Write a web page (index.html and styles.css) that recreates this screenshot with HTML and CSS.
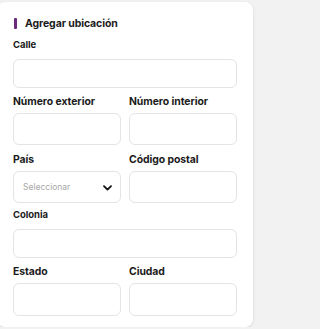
FILE: index.html
```html
<!DOCTYPE html>
<html lang="es">
<head>
<meta charset="utf-8">
<title>Agregar ubicación</title>
<link rel="stylesheet" href="styles.css">
</head>
<body>
<div class="card">
  <div class="title"><span class="bar"></span><span>Agregar ubicación</span></div>

  <div class="field wide first">
    <label class="label small">Calle</label>
    <div class="input"></div>
  </div>

  <div class="row r1">
    <div class="field">
      <label class="label">Número exterior</label>
      <div class="input tall"></div>
    </div>
    <div class="field">
      <label class="label">Número interior</label>
      <div class="input tall"></div>
    </div>
  </div>

  <div class="row r2">
    <div class="field">
      <label class="label">País</label>
      <div class="input tall select">
        <span class="placeholder">Seleccionar</span>
        <svg class="chev" width="9" height="6" viewBox="0 0 9 6"><path d="M1 1.2 L4.5 4.6 L8 1.2" fill="none" stroke="#111" stroke-width="1.8" stroke-linecap="round" stroke-linejoin="round"/></svg>
      </div>
    </div>
    <div class="field">
      <label class="label">Código postal</label>
      <div class="input tall"></div>
    </div>
  </div>

  <div class="field wide r3">
    <label class="label small">Colonia</label>
    <div class="input"></div>
  </div>

  <div class="row r4">
    <div class="field">
      <label class="label">Estado</label>
      <div class="input tall"></div>
    </div>
    <div class="field">
      <label class="label">Ciudad</label>
      <div class="input tall"></div>
    </div>
  </div>
</div>
</body>
</html>
```
FILE: styles.css
```css
html, body {
  margin: 0;
  padding: 0;
  background: #f2f2f2;
}
body {
  font-family: Inter, "Noto Sans", sans-serif;
  color: #1b1b1b;
}
.card {
  margin: 2px 2px 0 -3px;
  width: 256px;
  box-sizing: border-box;
  background: #fff;
  border-radius: 8px;
  box-shadow: 0 1px 3px rgba(0,0,0,0.12);
  padding: 14px 16px 11px;
  display: flex;
  flex-direction: column;
}
.title {
  display: flex;
  align-items: center;
  gap: 8px;
  height: 14px;
  font-size: 10.5px;
  font-weight: 700;
  letter-spacing: -0.1px;
}
.bar {
  width: 3px;
  height: 11px;
  margin-left: 1px;
  background: #6b2a7e;
  border-radius: 1px;
}
.field {
  display: flex;
  flex-direction: column;
}
.label {
  display: block;
  height: 12px;
  line-height: 12px;
  font-size: 10.4px;
  font-weight: 700;
  letter-spacing: -0.05px;
  margin-bottom: 5px;
}
.label.small {
  font-size: 9.5px;
  margin-bottom: 8px;
}
.input {
  height: 29px;
  box-sizing: border-box;
  border: 1px solid #e4e4e4;
  border-radius: 6px;
  background: #fff;
}
.input.tall {
  height: 32px;
}
.row {
  display: grid;
  grid-template-columns: 1fr 1fr;
  gap: 8px;
}
.first { margin-top: 9px; }
.r1 { margin-top: 8px; }
.r2 { margin-top: 9px; }
.r3 { margin-top: 6px; }
.r4 { margin-top: 8px; }
.r4 .input.tall { height: 33px; }
.select {
  display: flex;
  align-items: center;
  justify-content: space-between;
  padding: 0 8px 0 9px;
}
.placeholder {
  font-size: 8.5px;
  color: #a8a8a8;
  font-weight: 400;
}
.chev {
  display: block;
  margin-top: 2px;
}
```
